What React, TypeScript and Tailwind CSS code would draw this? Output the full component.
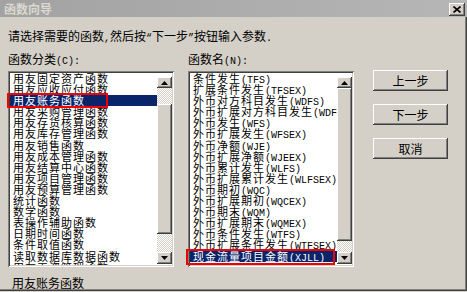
import React from 'react'

const leftItems = [
  '用友固定资产函数',
  '用友应收应付函数',
  '用友账务函数',
  '用友采购管理函数',
  '用友存货核算函数',
  '用友库存管理函数',
  '用友销售函数',
  '用友成本管理函数',
  '用友结算中心函数',
  '用友项目管理函数',
  '用友预算管理函数',
  '统计函数',
  '数学函数',
  '表操作辅助函数',
  '日期时间函数',
  '条件取值函数',
  '读取数据库数据函数',
  '用友工资管理函数',
]

const rightItems = [
  '条件发生(TFS)',
  '扩展条件发生(TFSEX)',
  '外币对方科目发生(WDFS)',
  '外币扩展对方科目发生(WDFS)',
  '外币发生(WFS)',
  '外币扩展发生(WFSEX)',
  '外币净额(WJE)',
  '外币扩展净额(WJEEX)',
  '外币累计发生(WLFS)',
  '外币扩展累计发生(WLFSEX)',
  '外币期初(WQC)',
  '外币扩展期初(WQCEX)',
  '外币期末(WQM)',
  '外币扩展期末(WQMEX)',
  '外币条件发生(WTFS)',
  '外币扩展条件发生(WTFSEX)',
  '现金流量项目金额(XJLL)',
]

const raised =
  'bg-[#d4d0c8] shadow-[inset_-1px_-1px_#404040,inset_1px_1px_#ffffff,inset_-2px_-2px_#808080,inset_2px_2px_#d4d0c8]'
const track =
  'bg-[repeating-conic-gradient(#ffffff_0_25%,#d4d0c8_0_50%)] bg-[length:2px_2px]'

// half-width runs (ascii + curly quotes) get the narrow mono face, like SimSun
function Txt({ s }: { s: string }) {
  const parts = s.split(/([\x20-\x7e\u201c\u201d]+)/)
  return (
    <>
      {parts.map((p, i) =>
        i % 2 ? (
          <span key={i} className="font-['Liberation_Mono',monospace] text-[10px] tracking-normal">
            {p}
          </span>
        ) : (
          p
        ),
      )}
    </>
  )
}

function Arrow({ up }: { up?: boolean }) {
  return (
    <svg width="7" height="4" viewBox="0 0 7 4">
      <path d={up ? 'M3.5 0 L7 4 L0 4 Z' : 'M0 0 L7 0 L3.5 4 Z'} fill="#000" />
    </svg>
  )
}

function ListBox({
  items,
  selected,
  thumb,
  mark,
}: {
  items: string[]
  selected: number
  thumb: [number, number, number]
  mark: string
}) {
  return (
    <div className="relative flex h-[196px] w-[166px] bg-white p-[2px] shadow-[inset_1px_1px_#808080,inset_-1px_-1px_#ffffff,inset_2px_2px_#404040,inset_-2px_-2px_#d4d0c8]">
      <div className="flex-1 overflow-hidden">
        {items.map((it, i) => (
          <div
            key={it + i}
            className={`h-[11.1px] pl-[3px] text-[11px] leading-[11.1px] tracking-[1px] whitespace-nowrap ${
              i === selected ? 'bg-[#0a246a] text-white' : 'text-black'
            }`}
          >
            <Txt s={it} />
          </div>
        ))}
      </div>
      <div className="flex w-[15px] flex-col">
        <div className="h-[4px] bg-white" />
        <div className={`flex h-[11px] items-center justify-center ${raised}`}>
          <Arrow up />
        </div>
        <div className={track} style={{ height: thumb[0] }} />
        <div className={raised} style={{ height: thumb[1] }} />
        <div className={track} style={{ height: thumb[2] }} />
        <div className={`flex h-[12px] items-center justify-center ${raised}`}>
          <Arrow />
        </div>
        <div className="h-[1px] bg-white" />
      </div>
      <div className={`pointer-events-none absolute border-2 border-[#f00000] ${mark}`} />
    </div>
  )
}

function Btn({ label }: { label: string }) {
  return (
    <button className={`h-[21px] w-[75px] text-[12px] leading-[21px] text-black ${raised}`}>
      {label}
    </button>
  )
}

export default function App() {
  return (
    <div className="flex h-[292px] w-[467px] flex-col bg-[#d4d0c8] pb-[2px] font-['Noto_Sans_CJK_SC',sans-serif] text-black">
      <div className="flex h-[17px] shrink-0 items-start justify-between bg-gradient-to-r from-[#a2a2a2] to-[#b6b6b6] pr-[2px] pl-[4px]">
        <span className="pt-[2px] text-[12px] leading-[13px] font-bold text-[#dcd8d0]">函数向导</span>
        <div className={`mt-[3px] flex h-[13px] w-[16px] items-center justify-center ${raised}`}>
          <svg width="8" height="7" viewBox="0 0 8 7">
            <path d="M0.5 0.5 L7.5 6.5 M7.5 0.5 L0.5 6.5" stroke="#000" strokeWidth="1.6" />
          </svg>
        </div>
      </div>

      <div className="flex flex-1 flex-col border-r border-b border-[#404040]">
        <div className="flex flex-1 flex-col border-r border-b border-[#808080] pt-[12px] pl-[8px]">
          <p className="text-[12px] leading-[13px]">
            <Txt s="请选择需要的函数,然后按“下一步”按钮输入参数." />
          </p>

          <div className="mt-[7px] flex">
            <div className="flex flex-col">
              <span className="text-[12px] leading-[13px]">
                <Txt s="函数分类(C):" />
              </span>
              <div className="mt-[3px]">
                <ListBox
                  items={leftItems}
                  selected={2}
                  thumb={[16, 130, 18]}
                  mark="top-[22px] -left-[1px] h-[15px] w-[101px]"
                />
              </div>
            </div>

            <div className="ml-[14px] flex flex-col">
              <span className="text-[12px] leading-[13px]">
                <Txt s="函数名(N):" />
              </span>
              <div className="mt-[3px]">
                <ListBox
                  items={rightItems}
                  selected={16}
                  thumb={[0, 153, 11]}
                  mark="top-[178px] -left-[2px] h-[16px] w-[149px]"
                />
              </div>
            </div>

            <div className="mt-[18px] ml-[19px] flex flex-col gap-[13px]">
              <Btn label="上一步" />
              <Btn label="下一步" />
              <Btn label="取消" />
            </div>
          </div>

          <p className="mt-[9px] pl-[4px] text-[12px] leading-[13px]">用友账务函数</p>
        </div>
      </div>
    </div>
  )
}
